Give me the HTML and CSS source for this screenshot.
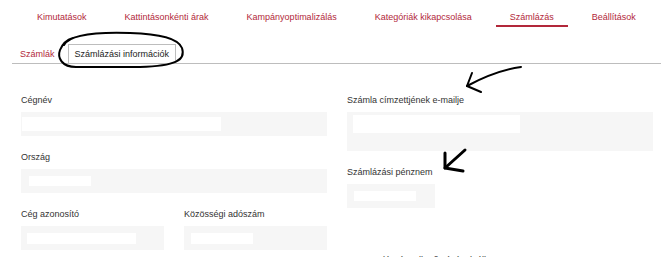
FILE: index.html
```html
<!DOCTYPE html>
<html lang="hu">
<head>
<meta charset="utf-8">
<title>Számlázás</title>
<link rel="stylesheet" href="styles.css">
</head>
<body>
<div class="page">
  <nav class="topnav">
    <a class="topnav-item">Kimutatások</a>
    <a class="topnav-item">Kattintásonkénti árak</a>
    <a class="topnav-item">Kampányoptimalizálás</a>
    <a class="topnav-item">Kategóriák kikapcsolása</a>
    <a class="topnav-item is-active">Számlázás</a>
    <a class="topnav-item">Beállítások</a>
  </nav>

  <div class="tabs">
    <a class="tab">Számlák</a>
    <a class="tab is-active">Számlázási információk</a>
  </div>

  <div class="form">
    <div class="col">
      <div class="field">
        <div class="label">Cégnév</div>
        <div class="box box-name"><span class="val val-name"></span></div>
      </div>
      <div class="field">
        <div class="label">Ország</div>
        <div class="box box-country"><span class="val val-country"></span></div>
      </div>
      <div class="pair">
        <div class="field">
          <div class="label">Cég azonosító</div>
          <div class="box box-id"><span class="val val-id"></span></div>
        </div>
        <div class="field">
          <div class="label">Közösségi adószám</div>
          <div class="box box-vat"><span class="val val-vat"></span></div>
        </div>
      </div>
    </div>
    <div class="col">
      <div class="field">
        <div class="label">Számla címzettjének e-mailje</div>
        <div class="box box-email"><span class="val val-email"></span></div>
      </div>
      <div class="field">
        <div class="label">Számlázási pénznem</div>
        <div class="box box-currency"><span class="val val-currency"></span></div>
      </div>
      <p class="note">Az adószám ellenőrzésének állapota</p>
    </div>
  </div>

  <svg class="marks" width="670" height="257" viewBox="0 0 670 257" aria-hidden="true">
    <path d="M64 45 C70 34 100 32 130 33 C160 34 178 38 182 48 C186 60 176 66 140 67 L76 67 C62 67 57 58 60 50 C62 45 66 40 73 38" />
    <path d="M521 67 C500 70 482 78 467 86" />
    <path d="M472 73 L467 86 L481 92" />
    <path class="thick" d="M465 150 L445 168" />
    <path class="thick" d="M445 153 L445 168 L463 171" />
  </svg>
</div>
</body>
</html>
```

FILE: styles.css
```css
* { box-sizing: border-box; }

html, body {
  margin: 0;
  padding: 0;
  background: #fff;
  overflow: hidden;
}

body {
  font-family: "Liberation Sans", Arial, sans-serif;
  font-size: 9px;
  color: #333;
}

.page {
  position: relative;
  width: 670px;
  height: 257px;
  overflow: hidden;
}

.topnav {
  display: flex;
  gap: 10px;
  padding-left: 23px;
}

.topnav-item {
  display: block;
  padding: 11px 14px 2px;
  line-height: 12px;
  color: #b2283a;
  border-bottom: 2px solid transparent;
  white-space: nowrap;
}

.topnav-item.is-active {
  border-bottom-color: #b2283a;
}

.tabs {
  display: flex;
  align-items: flex-end;
  gap: 13px;
  margin: 17px 9px 0 12px;
  padding-left: 8px;
  border-bottom: 1px solid #bdbdbd;
}

.tab {
  display: block;
  line-height: 12px;
  padding: 3px 0;
  color: #b2283a;
  white-space: nowrap;
}

.tab.is-active {
  color: #222;
  padding: 3px 6px;
  border: 1px solid #bdbdbd;
  border-bottom: none;
  background: #fff;
}

.form {
  display: grid;
  grid-template-columns: 306px 306px;
  column-gap: 20px;
  margin-top: 30px;
  padding-left: 21px;
}

.col {
  display: flex;
  flex-direction: column;
}

.field {
  margin-bottom: 15px;
}

.pair {
  display: grid;
  grid-template-columns: 143px 143px;
  column-gap: 20px;
}

.label {
  line-height: 12px;
  margin-bottom: 6px;
  color: #333;
  white-space: nowrap;
}

.box {
  display: flex;
  align-items: center;
  height: 24px;
  background: #f6f6f6;
}

.val {
  display: block;
  background: #fff;
}

.box-name { padding-left: 1px; }
.val-name { width: 199px; height: 14px; }

.box-country { padding-left: 8px; }
.val-country { width: 62px; height: 10px; }

.box-id { padding-left: 6px; }
.val-id { width: 109px; height: 11px; }

.box-vat { padding-left: 7px; }
.val-vat { width: 62px; height: 11px; }

.box-email {
  height: 39px;
  align-items: flex-start;
  padding: 3px 0 0 6px;
}
.val-email { width: 167px; height: 18px; }

.box-currency {
  width: 88px;
  padding-left: 7px;
}
.val-currency { width: 62px; height: 10px; }

.note {
  margin: 31px 0 0;
  padding-left: 15px;
  line-height: 12px;
  font-size: 9px;
  color: #333;
  white-space: nowrap;
}

.marks {
  position: absolute;
  left: 0;
  top: 0;
  pointer-events: none;
  fill: none;
  stroke: #000;
  stroke-width: 2;
  stroke-linecap: round;
  stroke-linejoin: round;
}

.marks .thick {
  stroke-width: 3;
}
```
